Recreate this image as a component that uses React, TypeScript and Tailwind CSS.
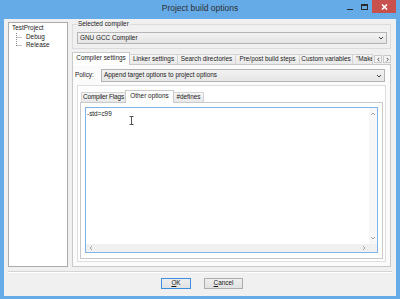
import React from "react";

const Chevron = ({ dir, className = "" }: { dir: "up" | "down" | "left" | "right"; className?: string }) => {
  const paths: Record<string, string> = {
    down: "M1 2 L3 4 L5 2",
    up: "M1 4 L3 2 L5 4",
    left: "M4 1 L2 3 L4 5",
    right: "M2 1 L4 3 L2 5",
  };
  return (
    <svg width="6" height="6" viewBox="0 0 6 6" className={className}>
      <path d={paths[dir]} fill="none" stroke="currentColor" strokeWidth="1" />
    </svg>
  );
};

const Tab = ({ label, w, selected = false, left = false }: { label: string; w: number; selected?: boolean; left?: boolean }) => (
  <div
    style={{ width: w }}
    className={
      "-ml-px flex items-center overflow-hidden whitespace-nowrap border border-b-0 " +
      (left ? "justify-start pl-[3px] " : "justify-center ") +
      (selected
        ? "relative z-10 h-[13px] -mb-px border-[#c9c9c9] bg-white pb-[1px]"
        : "h-[10px] border-[#d4d4d4] bg-gradient-to-b from-[#f5f5f5] to-[#e8e8e8]")
    }
  >
    {label}
  </div>
);

export default function App() {
  return (
    <div className="flex h-[299px] w-[400px] flex-col overflow-hidden bg-[#64abe8] font-['Liberation_Sans',Arial,sans-serif] text-[6.4px] leading-none text-[#1a1a1a]">
      {/* Title bar */}
      <div className="grid h-[19px] grid-cols-[1fr_auto_1fr]">
        <div />
        <div className="flex items-center pb-[2px] text-[8.5px] text-[#303030]">Project build options</div>
        <div className="flex items-start justify-end pr-[4px]">
          <div className="flex h-[13px] w-[13px] items-end justify-center pb-[3px]">
            <div className="h-[1.5px] w-[6px] bg-[#2a2a2a]" />
          </div>
          <div className="flex h-[13px] w-[16px] items-center justify-center">
            <div className="h-[6px] w-[7px] border border-t-2 border-[#2a2a2a]" />
          </div>
          <div className="flex h-[13px] w-[24px] items-center justify-center bg-[#c9514d]">
            <svg width="7" height="6" viewBox="0 0 7 6">
              <path d="M1 0.5 L6 5.5 M6 0.5 L1 5.5" stroke="white" strokeWidth="1.6" />
            </svg>
          </div>
        </div>
      </div>

      {/* Body */}
      <div className="mx-[4px] mb-[3px] flex flex-1 flex-col bg-[#f0f0f0]">
        <div className="flex h-[248px] gap-[4px] pl-[4px] pt-[3px]">
          {/* Tree */}
          <div className="h-[245px] w-[60px] border border-[#acacac] bg-white pl-[3px] pt-[1px]">
            <div className="flex h-[8.5px] items-center">TestProject</div>
            <div className="flex">
              <svg width="10" height="17" viewBox="0 0 10 17" className="ml-[4px] shrink-0">
                <path d="M0.5 0 V13 M0.5 4.5 H6 M0.5 12.5 H6" stroke="#8c8c8c" strokeWidth="1" strokeDasharray="1 1" fill="none" />
              </svg>
              <div className="flex flex-col">
                <div className="flex h-[8.5px] items-center">Debug</div>
                <div className="flex h-[8.5px] items-center">Release</div>
              </div>
            </div>
          </div>

          {/* Right column */}
          <div className="flex w-[319px] flex-col">
            {/* Group box */}
            <div className="relative mt-[2px] h-[25px] border border-[#dcdcdc]">
              <span className="absolute -top-[4px] left-[4px] bg-[#f0f0f0] px-[1px]">Selected compiler</span>
              <div className="ml-[4px] mr-[3px] mt-[7px] flex h-[12px] items-center justify-between border border-[#b5b5b5] bg-gradient-to-b from-[#f2f2f2] to-[#e5e5e5] pl-[2px] pr-[2px]">
                <span>GNU GCC Compiler</span>
                <Chevron dir="down" className="text-[#404040]" />
              </div>
            </div>

            {/* Tabs */}
            <div className="mt-[3px] flex h-[12px] items-end pl-[1px]">
              <Tab label="Compiler settings" w={58} selected />
              <Tab label="Linker settings" w={49} />
              <Tab label="Search directories" w={59} />
              <Tab label="Pre/post build steps" w={65} />
              <Tab label="Custom variables" w={54} />
              <Tab label={'"Make" commands'} w={21} left />
              <div className="mb-[1px] ml-[1px] flex h-[8px] w-[8px] items-center justify-center border border-[#c9c9c9] bg-[#f3f3f3]">
                <Chevron dir="left" className="h-[5px] w-[5px] text-[#333]" />
              </div>
              <div className="mb-[1px] ml-[1px] flex h-[8px] w-[8px] items-center justify-center border border-[#c9c9c9] bg-[#f3f3f3]">
                <Chevron dir="right" className="h-[5px] w-[5px] text-[#333]" />
              </div>
            </div>

            {/* Outer panel */}
            <div className="flex h-[203px] flex-col border border-[#c9c9c9] bg-[#fbfbfb]">
              <div className="mt-[4px] flex items-center pl-[2px] pr-[5px]">
                <span className="w-[26px]">Policy:</span>
                <div className="flex h-[13px] flex-1 items-center justify-between border border-[#b5b5b5] bg-gradient-to-b from-[#f2f2f2] to-[#e5e5e5] pl-[2px] pr-[2px]">
                  <span>Append target options to project options</span>
                  <Chevron dir="down" className="text-[#404040]" />
                </div>
              </div>

              <div className="mx-[4px] mb-[4px] mt-[3px] flex flex-1 flex-col border border-[#dedede] bg-white px-[2px]">
                {/* Inner tabs */}
                <div className="mt-[4px] flex h-[12px] items-end pl-[2px]">
                  <div className="tracking-[-0.15px] flex items-end">
                    <Tab label="Compiler Flags" w={45} />
                  </div>
                  <Tab label="Other options" w={49} selected />
                  <Tab label="#defines" w={31} />
                </div>
                <div className="mb-[2px] flex flex-1 flex-col border border-[#c9c9c9] bg-white p-[4px] pb-[5px]">
                  {/* Text area */}
                  <div className="flex flex-1 flex-col border border-[#7eb4ea] bg-white">
                    <div className="flex flex-1">
                      <div className="relative flex-1 pl-[1px] pt-[3px] text-[6.4px]">
                        <span>-std=c99</span>
                        <svg width="5" height="9" viewBox="0 0 5 9" className="absolute left-[43px] top-[8px]">
                          <path d="M0.5 0.5 H4.5 M2.5 0.5 V8.5 M0.5 8.5 H4.5" stroke="#555" strokeWidth="1" fill="none" />
                        </svg>
                      </div>
                      <div className="flex w-[8px] flex-col items-center justify-between bg-[#f7f7f7] py-[3px] text-[#a6a6a6]">
                        <Chevron dir="up" />
                        <Chevron dir="down" />
                      </div>
                    </div>
                    <div className="flex h-[8px]">
                      <div className="flex flex-1 items-center justify-between bg-[#f0f0f0] px-[2px] text-[#a6a6a6]">
                        <Chevron dir="left" />
                        <Chevron dir="right" />
                      </div>
                      <div className="w-[8px] bg-[#f0f0f0]" />
                    </div>
                  </div>
                </div>
              </div>
            </div>
          </div>
        </div>

        {/* Separator */}
        <div className="mx-[4px] mt-[4px] h-[2px] border-b border-t border-b-white border-t-[#d5d5d5]" />

        {/* Buttons */}
        <div className="mt-[5px] flex justify-center gap-[13px] pl-[4px]">
          <div className="flex h-[11px] w-[30px] items-center justify-center border border-[#3c8fe0] bg-gradient-to-b from-[#eeeeee] to-[#e2e2e2]">
            <span><span className="underline">O</span>K</span>
          </div>
          <div className="flex h-[11px] w-[39px] items-center justify-center border border-[#adadad] bg-gradient-to-b from-[#eeeeee] to-[#e2e2e2]">
            <span><span className="underline">C</span>ancel</span>
          </div>
        </div>
      </div>
    </div>
  );
}
